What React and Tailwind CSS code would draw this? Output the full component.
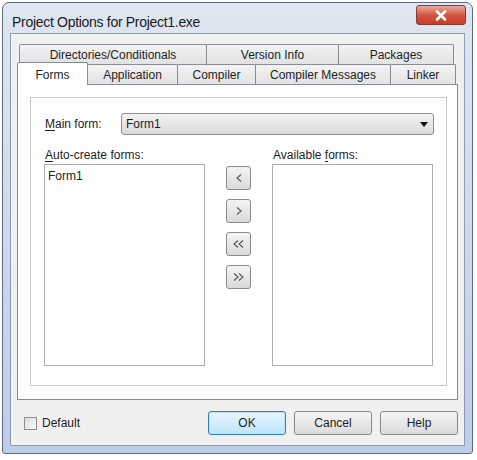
import React from 'react';

const font = { fontFamily: '"Liberation Sans", Arial, sans-serif' };

const backTabs = [
  { label: 'Directories/Conditionals', w: 'w-[188px]' },
  { label: 'Version Info', w: 'w-[133px]' },
  { label: 'Packages', w: 'w-[116px]' },
];

const frontTabs = [
  { label: 'Application', w: 'w-[91px]' },
  { label: 'Compiler', w: 'w-[79px]' },
  { label: 'Compiler Messages', w: 'w-[136px]' },
  { label: 'Linker', w: 'w-[66px]' },
];

const Tab = ({ label, w }) => (
  <div
    className={`${w} h-[20px] flex items-center justify-center border border-b-0 border-[#898c95] bg-gradient-to-b from-[#f3f3f3] to-[#e2e2e2] text-[12px] text-[#1e1e1e] -ml-px first:ml-0 rounded-t-[2px]`}
  >
    {label}
  </div>
);

// thin chevrons drawn like the classic move buttons
const Chevron = ({ dir, double }) => {
  const one = dir === 'left' ? 'M6 1.5 L2 5 L6 8.5' : 'M2 1.5 L6 5 L2 8.5';
  const two = dir === 'left' ? 'M11 1.5 L7 5 L11 8.5' : 'M7 1.5 L11 5 L7 8.5';
  return (
    <svg width={double ? 13 : 8} height="10" viewBox={double ? '0 0 13 10' : '0 0 8 10'}>
      <path d={one} stroke="#555555" strokeWidth="1.1" fill="none" />
      {double && <path d={two} stroke="#555555" strokeWidth="1.1" fill="none" />}
    </svg>
  );
};

const ArrowButton = ({ children }) => (
  <button className="w-[25px] h-[24px] rounded-[3px] border border-[#8a8a8a] bg-gradient-to-b from-[#f4f4f4] to-[#dadada] flex items-center justify-center">
    {children}
  </button>
);

const DialogButton = ({ children, primary }) => (
  <button
    className={`w-[78px] h-[24px] rounded-[3px] border text-[12px] text-[#1e1e1e] flex items-center justify-center ${
      primary
        ? 'border-[#3c7fb1] bg-gradient-to-b from-[#eaf6fd] to-[#bee6fd] shadow-[inset_0_0_0_1px_#b6e2f4]'
        : 'border-[#8a8a8a] bg-gradient-to-b from-[#f4f4f4] to-[#dcdcdc]'
    }`}
  >
    {children}
  </button>
);

export default function App() {
  return (
    <div className="w-[477px] h-[460px] bg-white pt-[2px] pl-[2px]" style={font}>
      {/* window frame */}
      <div className="w-[471px] h-[452px] flex flex-col rounded-t-[7px] rounded-b-[3px] border border-[#5f6b80] bg-gradient-to-b from-[#dfe6f0] to-[#bccdea]">
        {/* title bar */}
        <div className="h-[30px] flex items-start justify-between pl-[9px] pr-[6px]">
          <span className="mt-[9px] text-[14px] text-[#1b1b1b] tracking-[-0.3px]">
            Project Options for Project1.exe
          </span>
          <div className="mt-[2px] w-[50px] h-[20px] rounded-[3px] border border-[#8a3b34] bg-gradient-to-b from-[#e9a99c] via-[#d2553f] to-[#c2402b] flex items-center justify-center">
            <svg width="12" height="11" viewBox="0 0 12 11">
              <path d="M2 1.5 L10 9.5 M10 1.5 L2 9.5" stroke="#ffffff" strokeWidth="2.6" strokeLinecap="round" />
            </svg>
          </div>
        </div>

        {/* client area */}
        <div className="mx-[7px] mb-[7px] flex-1 border border-[#8c9ab2] bg-[#f0f0f0] flex flex-col pt-[10px] px-[6px]">
          {/* tabs */}
          <div className="flex flex-col">
            <div className="flex pl-[2px]">
              {backTabs.map((t) => (
                <Tab key={t.label} {...t} />
              ))}
            </div>
            <div className="flex items-end h-[20px]">
              <div className="w-[71px] h-[23px] -mb-px relative z-10 bg-white border border-b-0 border-[#898c95] rounded-t-[2px] flex items-start justify-center pt-[3px] text-[12px] text-[#1e1e1e]">
                Forms
              </div>
              {frontTabs.map((t) => (
                <Tab key={t.label} {...t} />
              ))}
            </div>
          </div>

          {/* tab page */}
          <div className="h-[316px] border border-[#898c95] bg-white pt-[12px] pl-[12px] pr-[10px] pb-[13px] flex">
            <div className="flex-1 border border-[#c9c9c9] pl-[13px] pt-[15px] text-[12px] text-[#1e1e1e]">
              <div className="flex items-center h-[22px]">
                <span className="w-[77px] pl-[1px]">
                  <span className="underline underline-offset-2">M</span>ain form:
                </span>
                <div className="w-[313px] h-[22px] rounded-[3px] border border-[#8e8f8f] bg-gradient-to-b from-[#f3f3f3] to-[#dadada] flex items-center justify-between pl-[4px] pr-[5px]">
                  <span>Form1</span>
                  <svg width="8" height="5" viewBox="0 0 8 5">
                    <path d="M0 0 H8 L4 5 Z" fill="#111111" />
                  </svg>
                </div>
              </div>

              <div className="flex mt-[13px]">
                <div className="flex flex-col w-[161px]">
                  <span className="pl-[1px] h-[15px] leading-[15px]">
                    <span className="underline underline-offset-2">A</span>uto-create forms:
                  </span>
                  <div className="mt-[1px] h-[202px] border border-[#abadb3] bg-white px-[3px] pt-[4px] leading-[14px]">
                    Form1
                  </div>
                </div>

                <div className="w-[67px] flex flex-col items-center pt-[18px] gap-[9px]">
                  <ArrowButton>
                    <Chevron dir="left" />
                  </ArrowButton>
                  <ArrowButton>
                    <Chevron dir="right" />
                  </ArrowButton>
                  <ArrowButton>
                    <Chevron dir="left" double />
                  </ArrowButton>
                  <ArrowButton>
                    <Chevron dir="right" double />
                  </ArrowButton>
                </div>

                <div className="flex flex-col w-[161px]">
                  <span className="pl-[1px] h-[15px] leading-[15px]">
                    Available <span className="underline underline-offset-2">f</span>orms:
                  </span>
                  <div className="mt-[1px] h-[202px] border border-[#abadb3] bg-white" />
                </div>
              </div>
            </div>
          </div>

          {/* bottom bar */}
          <div className="flex items-center mt-[11px] h-[24px] text-[12px] text-[#1e1e1e]">
            <label className="flex items-center gap-[5px] ml-[7px]">
              <span className="w-[13px] h-[13px] border border-[#8e8f8f] bg-gradient-to-br from-[#dcdcdc] to-[#fbfbfb]" />
              Default
            </label>
            <div className="ml-auto flex gap-[8px]">
              <DialogButton primary>OK</DialogButton>
              <DialogButton>Cancel</DialogButton>
              <DialogButton>Help</DialogButton>
            </div>
          </div>
        </div>
      </div>
    </div>
  );
}
